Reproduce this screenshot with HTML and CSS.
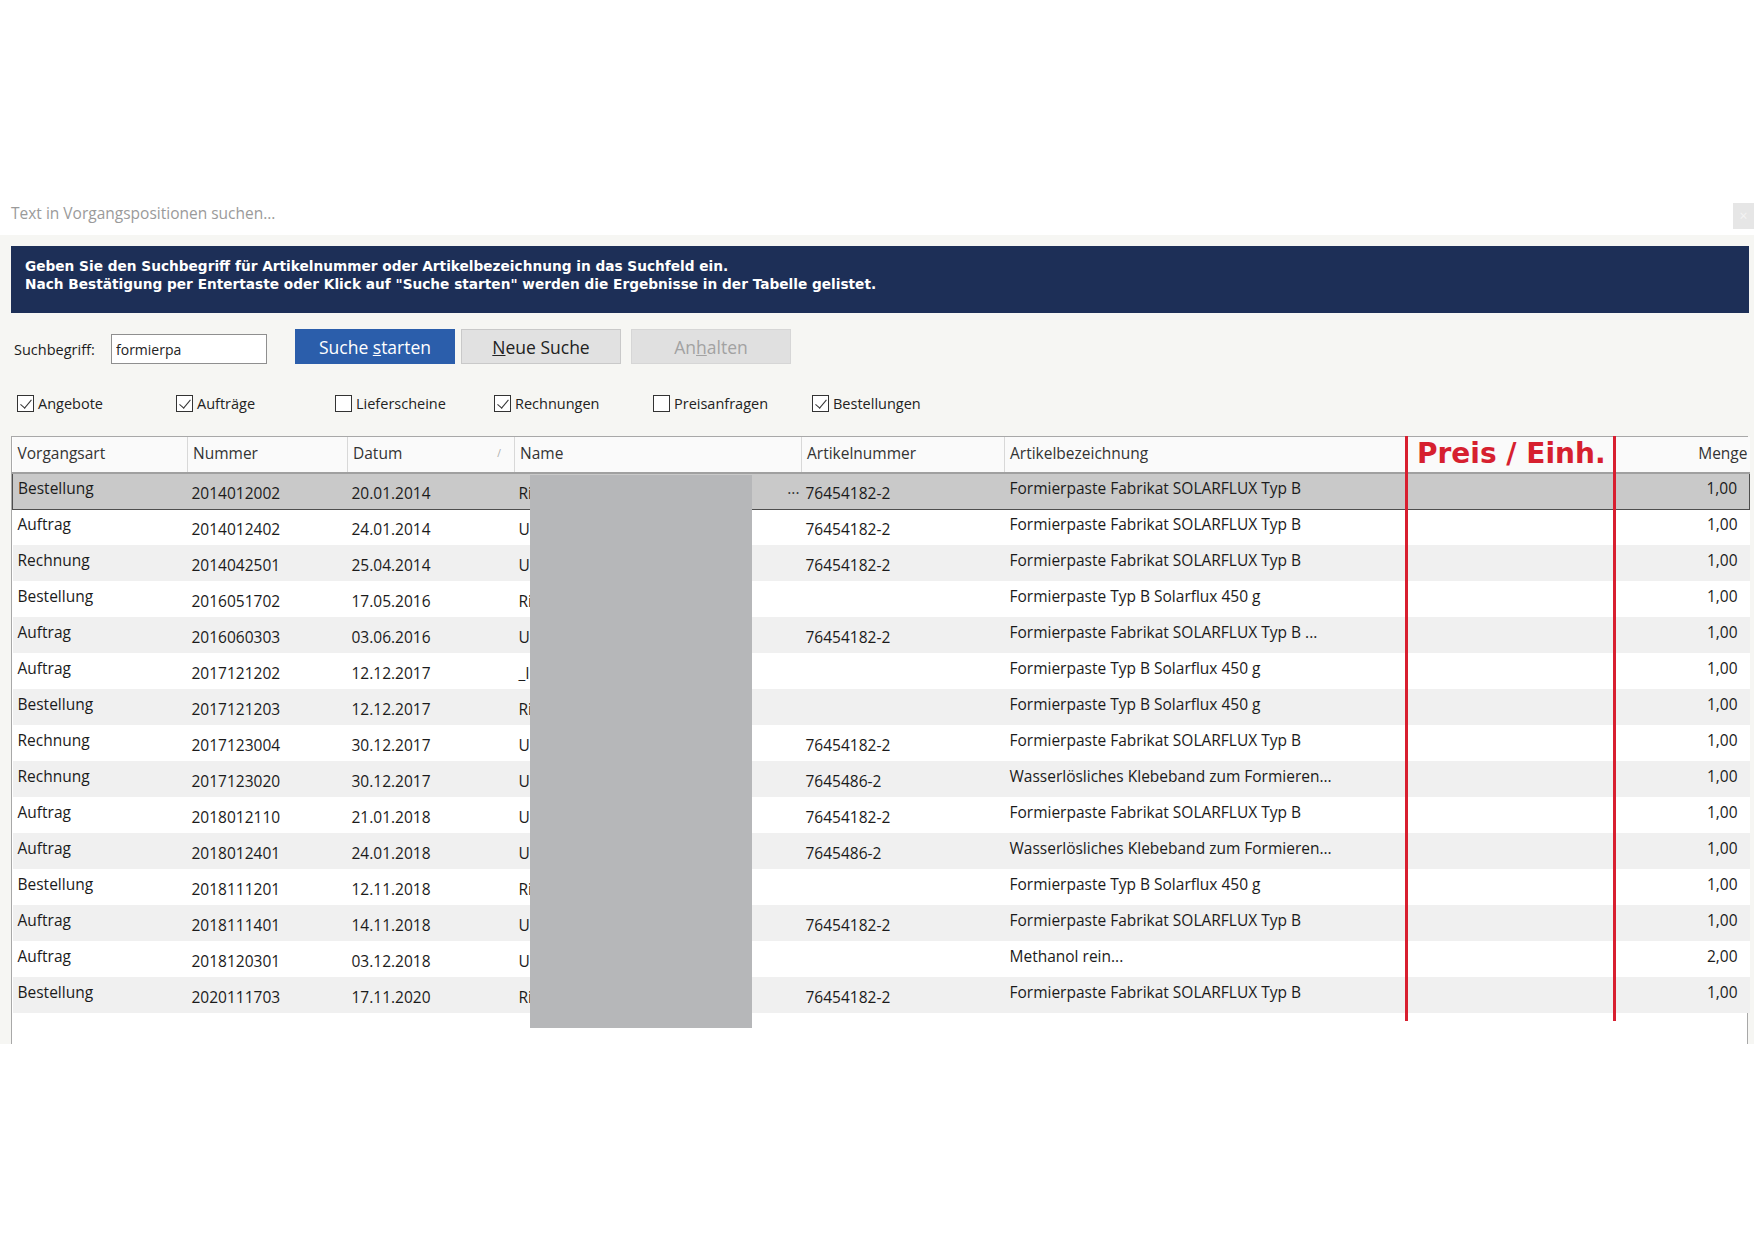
FILE: index.html
```html
<!DOCTYPE html>
<html lang="de">
<head>
    <meta charset="UTF-8">
    <title>Text in Vorgangspositionen suchen</title>
    <link rel="stylesheet" href="styles.css">
</head>
<body>

<div class="topspace"></div>

<div class="searchbar">
    <span class="hint">Text in Vorgangspositionen suchen...</span>
    <span class="closebox">×</span>
</div>

<div class="panel">
    <div class="banner">
        Geben Sie den Suchbegriff für Artikelnummer oder Artikelbezeichnung in das Suchfeld ein.<br>
        Nach Bestätigung per Entertaste oder Klick auf "Suche starten" werden die Ergebnisse in der Tabelle gelistet.
    </div>

    <div class="searchrow">
        <label for="term">Suchbegriff:</label>
        <input type="text" id="term" value="formierpa">
        <button class="btn primary">Suche <u>s</u>tarten</button>
        <button class="btn"><u>N</u>eue Suche</button>
        <button class="btn disabled">An<u>h</u>alten</button>
    </div>

    <div class="filters">
        <div class="check"><span class="box on"></span>Angebote</div>
        <div class="check"><span class="box on"></span>Aufträge</div>
        <div class="check"><span class="box"></span>Lieferscheine</div>
        <div class="check"><span class="box on"></span>Rechnungen</div>
        <div class="check"><span class="box"></span>Preisanfragen</div>
        <div class="check"><span class="box on"></span>Bestellungen</div>
    </div>

    <div class="grid-wrap">
        <table class="grid">
            <colgroup>
                <col style="width:175px">
                <col style="width:160px">
                <col style="width:167px">
                <col style="width:287px">
                <col style="width:203px">
                <col style="width:402px">
                <col style="width:209px">
                <col style="width:134px">
            </colgroup>
            <thead>
                <tr>
                    <th>Vorgangsart</th>
                    <th>Nummer</th>
                    <th>Datum <span class="sort">/</span></th>
                    <th>Name</th>
                    <th>Artikelnummer</th>
                    <th>Artikelbezeichnung</th>
                    <th class="price">Preis / Einh.</th>
                    <th class="num">Menge</th>
                </tr>
            </thead>
            <tbody id="rows"></tbody>
        </table>
        <div class="redact"></div>
        <div class="mark first"></div>
        <div class="mark second"></div>
    </div>
</div>

<script>
    const rows = [
        ["Bestellung", "2014012002", "20.01.2014", "Ri", "76454182-2", "Formierpaste Fabrikat SOLARFLUX Typ B", "1,00"],
        ["Auftrag", "2014012402", "24.01.2014", "U", "76454182-2", "Formierpaste Fabrikat SOLARFLUX Typ B", "1,00"],
        ["Rechnung", "2014042501", "25.04.2014", "U", "76454182-2", "Formierpaste Fabrikat SOLARFLUX Typ B", "1,00"],
        ["Bestellung", "2016051702", "17.05.2016", "Ri", "", "Formierpaste Typ B Solarflux 450 g", "1,00"],
        ["Auftrag", "2016060303", "03.06.2016", "U", "76454182-2", "Formierpaste Fabrikat SOLARFLUX Typ B ...", "1,00"],
        ["Auftrag", "2017121202", "12.12.2017", "_I", "", "Formierpaste Typ B Solarflux 450 g", "1,00"],
        ["Bestellung", "2017121203", "12.12.2017", "Ri", "", "Formierpaste Typ B Solarflux 450 g", "1,00"],
        ["Rechnung", "2017123004", "30.12.2017", "U", "76454182-2", "Formierpaste Fabrikat SOLARFLUX Typ B", "1,00"],
        ["Rechnung", "2017123020", "30.12.2017", "U", "7645486-2", "Wasserlösliches Klebeband zum Formieren...", "1,00"],
        ["Auftrag", "2018012110", "21.01.2018", "U", "76454182-2", "Formierpaste Fabrikat SOLARFLUX Typ B", "1,00"],
        ["Auftrag", "2018012401", "24.01.2018", "U", "7645486-2", "Wasserlösliches Klebeband zum Formieren...", "1,00"],
        ["Bestellung", "2018111201", "12.11.2018", "Ri", "", "Formierpaste Typ B Solarflux 450 g", "1,00"],
        ["Auftrag", "2018111401", "14.11.2018", "U", "76454182-2", "Formierpaste Fabrikat SOLARFLUX Typ B", "1,00"],
        ["Auftrag", "2018120301", "03.12.2018", "U", "", "Methanol rein...", "2,00"],
        ["Bestellung", "2020111703", "17.11.2020", "Ri", "76454182-2", "Formierpaste Fabrikat SOLARFLUX Typ B", "1,00"]
    ];

    const tbody = document.getElementById("rows");
    rows.forEach((r, i) => {
        const tr = document.createElement("tr");
        if (i === 0) tr.className = "selected";
        const name = i === 0 ? `${r[3]}<span class="dots">···</span>` : r[3];
        tr.innerHTML =
            `<td class="kind">${r[0]}</td>` +
            `<td>${r[1]}</td>` +
            `<td>${r[2]}</td>` +
            `<td class="name">${name}</td>` +
            `<td>${r[4]}</td>` +
            `<td class="kind">${r[5]}</td>` +
            `<td></td>` +
            `<td class="num kind">${r[6]}</td>`;
        tbody.appendChild(tr);
    });
</script>

</body>
</html>
```

FILE: styles.css
```css
body {
    margin: 0;
    background-color: white;
    font-family: "Open Sans", "Noto Sans", sans-serif;
    color: #1b1b1b;
}
.topspace {
    height: 198px;
}
.searchbar {
    height: 37px;
    display: flex;
    justify-content: space-between;
    align-items: flex-start;
}
.hint {
    margin: 5px 0 0 11px;
    font-size: 15.5px;
    line-height: 20px;
    color: #9a9a9a;
}
.closebox {
    margin-top: 5px;
    width: 21px;
    height: 26px;
    background-color: #e6e6e6;
    color: #f4f4f4;
    font-size: 14px;
    line-height: 26px;
    text-align: center;
}
.panel {
    background-color: #f6f6f3;
    padding: 11px 5px 0 11px;
}
.banner {
    height: 67px;
    box-sizing: border-box;
    padding: 11px 14px 0;
    background-color: #1d2f57;
    color: white;
    font-family: "DejaVu Sans", sans-serif;
    font-weight: bold;
    font-size: 13.7px;
    line-height: 18px;
}
.searchrow {
    margin-top: 16px;
    height: 35px;
    display: flex;
    align-items: center;
}
.searchrow label {
    width: 97px;
    padding-left: 3px;
    font-size: 14.5px;
    padding-top: 6px;
}
.searchrow input {
    width: 156px;
    height: 30px;
    box-sizing: border-box;
    margin: 5px 28px 0 0;
    padding: 0 4px;
    border: 1px solid #8f8f8f;
    background: white;
    font-family: inherit;
    font-size: 14px;
    color: #222;
}
.btn {
    width: 160px;
    height: 35px;
    margin-right: 6px;
    border: 1px solid #c9c9c9;
    background-color: #e1e1e1;
    font-family: inherit;
    font-size: 17.5px;
    color: #222;
    padding: 0;
}
.btn.primary {
    background-color: #2b5eab;
    border-color: #2b5eab;
    color: white;
}
.btn.disabled {
    margin-left: 4px;
    border-color: #d6d6d6;
    background-color: #e0e0e0;
    color: #a2a2a2;
}
.filters {
    margin-top: 28px;
    height: 22px;
    display: flex;
    padding-left: 6px;
}
.check {
    width: 159px;
    display: flex;
    align-items: center;
    font-size: 14.5px;
    color: #222;
}
.box {
    width: 17px;
    height: 17px;
    box-sizing: border-box;
    border: 1px solid #333;
    background-color: white;
    margin-right: 4px;
    position: relative;
}
.box.on::after {
    content: "";
    position: absolute;
    left: 5px;
    top: 1px;
    width: 5px;
    height: 10px;
    border: solid #333;
    border-width: 0 1.5px 1.5px 0;
    transform: rotate(40deg);
}
.grid-wrap {
    position: relative;
    margin-top: 22px;
    width: 1737px;
    height: 608px;
    background-color: white;
    border: 1px solid #a8a8a8;
    border-bottom: none;
    box-sizing: border-box;
}
.grid {
    table-layout: fixed;
    border-collapse: collapse;
    width: 1735px;
    font-size: 15.5px;
}
.grid th {
    height: 36px;
    box-sizing: border-box;
    padding: 0 5px 4px;
    line-height: 20px;
    text-align: left;
    font-weight: normal;
    color: #333;
    background-color: #fafafa;
    border-left: 1px solid #d8d8d8;
    border-bottom: 2px solid #a0a0a0;
    white-space: nowrap;
}
.grid th:first-child {
    border-left: none;
}
.grid th.price {
    font-family: "DejaVu Sans", sans-serif;
    font-weight: bold;
    font-size: 28px;
    line-height: 30px;
    color: #d6202f;
    padding: 0 0 2px 10px;
    overflow: hidden;
}
.grid th.num, .grid td.num {
    text-align: right;
    padding-right: 4px;
}
.grid th.num {
    padding-right: 2px;
}
.sort {
    float: right;
    font-size: 10px;
    color: #aaa;
    margin-right: 8px;
}
.grid td {
    height: 36px;
    padding: 3px 4px 0 4px;
    line-height: 20px;
    white-space: nowrap;
    overflow: hidden;
    box-sizing: border-box;
}
.grid td.kind {
    padding: 0 4px 6px 5px;
}
.grid td.num {
    padding-right: 12px;
}
.grid tbody tr:nth-child(odd) {
    background-color: #f0f0f0;
}
.grid tbody tr:nth-child(even) {
    background-color: white;
}
.grid tbody tr.selected {
    background-color: #c9c9c9;
}
.grid tr.selected td {
    border-top: 1px solid #4e4e4e;
    border-bottom: 1px solid #4e4e4e;
}
.grid tr.selected td:first-child {
    border-left: 1px solid #4e4e4e;
}
.grid tr.selected td:last-child {
    border-right: 1px solid #4e4e4e;
}
.name {
    position: relative;
}
.dots {
    position: absolute;
    right: 2px;
    color: #333;
}
.redact {
    position: absolute;
    left: 518px;
    top: 38px;
    width: 222px;
    height: 553px;
    background-color: #b6b7b9;
}
.mark {
    position: absolute;
    top: -1px;
    width: 3px;
    height: 585px;
    background-color: #d81f30;
}
.mark.first {
    left: 1393px;
}
.mark.second {
    left: 1601px;
}
```
